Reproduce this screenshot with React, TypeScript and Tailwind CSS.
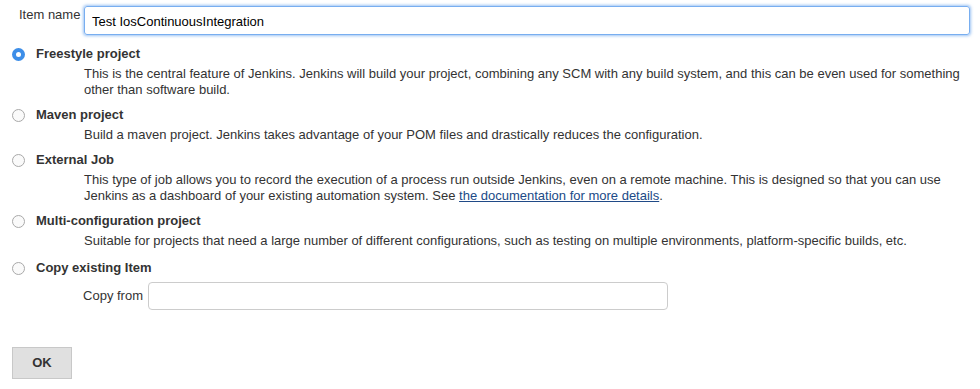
import React, { useState } from 'react'

type JobType = {
  id: string
  label: string
  desc: React.ReactNode
}

const jobTypes: JobType[] = [
  {
    id: 'freestyle',
    label: 'Freestyle project',
    desc: 'This is the central feature of Jenkins. Jenkins will build your project, combining any SCM with any build system, and this can be even used for something other than software build.',
  },
  {
    id: 'maven',
    label: 'Maven project',
    desc: 'Build a maven project. Jenkins takes advantage of your POM files and drastically reduces the configuration.',
  },
  {
    id: 'external',
    label: 'External Job',
    desc: (
      <>
        This type of job allows you to record the execution of a process run outside Jenkins, even on a remote machine. This is
        designed so that you can use Jenkins as a dashboard of your existing automation system. See{' '}
        <a href="#" className="text-[#204a87] underline">
          the documentation for more details
        </a>
        .
      </>
    ),
  },
  {
    id: 'matrix',
    label: 'Multi-configuration project',
    desc: 'Suitable for projects that need a large number of different configurations, such as testing on multiple environments, platform-specific builds, etc.',
  },
]

function Radio({ checked }: { checked: boolean }) {
  if (checked) {
    return (
      <span className="flex h-[13px] w-[13px] shrink-0 items-center justify-center rounded-full bg-[#3d8ee8]">
        <span className="h-[5px] w-[5px] rounded-full bg-white" />
      </span>
    )
  }
  return <span className="h-[13px] w-[13px] shrink-0 rounded-full border border-[#a9a9a9] bg-[#fafafa]" />
}

export default function App() {
  const [name, setName] = useState('Test IosContinuousIntegration')
  const [selected, setSelected] = useState('freestyle')

  return (
    <div className="min-h-[389px] bg-white pl-3 pr-[10px] pt-[6px] font-['Liberation_Sans',Arial,sans-serif] text-[13px] text-[#333]">
      {/* Item name */}
      <div className="flex items-start">
        <label className="w-[72px] shrink-0 pl-[7px] pt-[1px] leading-4">Item name</label>
        <input
          value={name}
          onChange={(e) => setName(e.target.value)}
          className="h-[29px] flex-1 rounded-[3px] border border-[#78aef0] px-[7px] pt-[2px] text-[13px] text-black shadow-[0_0_3px_1px_rgba(90,155,235,0.6)] outline-none"
        />
      </div>

      {/* Job types */}
      <div className="mt-[11px] flex flex-col gap-[9px]">
        {jobTypes.map((job) => (
          <div key={job.id}>
            <div className="flex h-4 items-center cursor-pointer" onClick={() => setSelected(job.id)}>
              <Radio checked={selected === job.id} />
              <span className="ml-[11px] font-bold leading-4">{job.label}</span>
            </div>
            <div className="mt-1 pl-[72px] leading-4">{job.desc}</div>
          </div>
        ))}

        <div className="mt-[2px]">
          <div className="flex h-4 items-center cursor-pointer" onClick={() => setSelected('copy')}>
            <Radio checked={selected === 'copy'} />
            <span className="ml-[11px] font-bold leading-4">Copy existing Item</span>
          </div>
          <div className="mt-[6px] flex items-center">
            <span className="w-[136px] shrink-0 pr-[5px] text-right">Copy from</span>
            <input className="h-[28px] w-[520px] rounded-[4px] border border-[#ccc] px-2 text-[13px] outline-none" />
          </div>
        </div>
      </div>

      {/* Submit */}
      <button className="mt-[37px] h-[32px] w-[60px] border border-[#c8c8c8] bg-[#e0e0e0] text-[13px] font-bold text-[#333]">
        OK
      </button>
    </div>
  )
}
